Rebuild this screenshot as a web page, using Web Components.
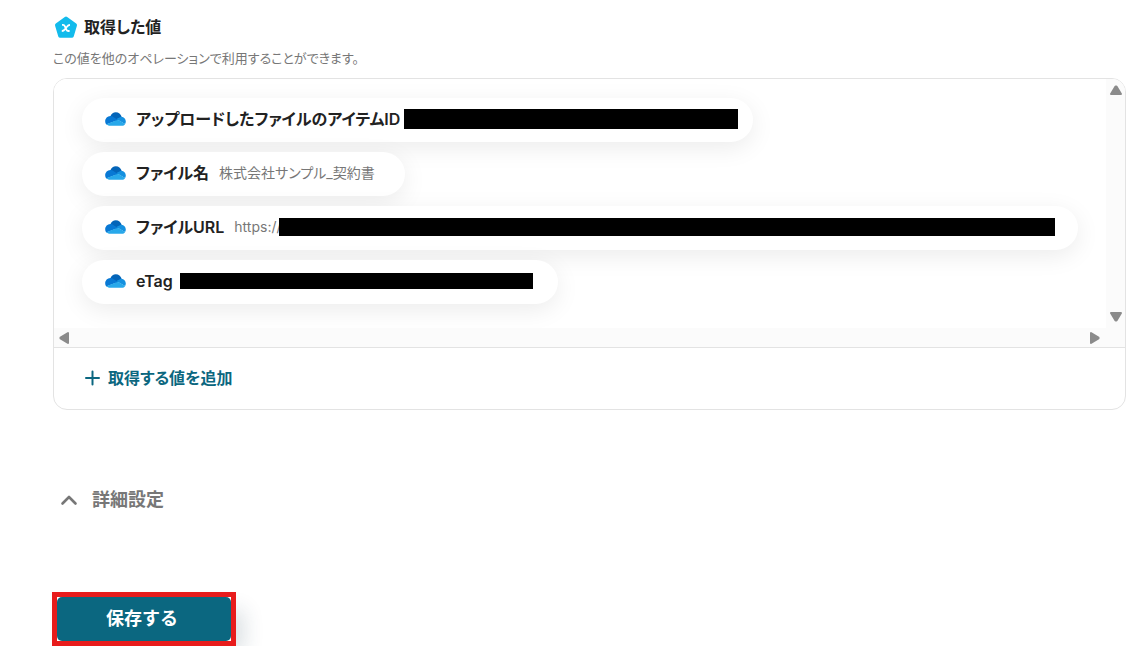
<!DOCTYPE html>
<html lang="ja">
<head>
<meta charset="utf-8">
<meta name="viewport" content="width=device-width, initial-scale=1">
<title>取得した値</title>
<style>
  body { margin: 0; background: #fff; color: #222; font-family: Inter, "Noto Sans CJK JP", sans-serif; font-feature-settings: "palt"; }
</style>
</head>
<body>
<operation-page></operation-page>
<script>
const define = (name, html) => {
  const template = document.createElement('template');
  template.innerHTML = html;
  customElements.define(name, class extends HTMLElement {
    constructor() {
      super();
      this.attachShadow({ mode: 'open' }).append(template.content.cloneNode(true));
    }
  });
};

define('variable-icon', `
<style>:host { display: block; width: 24px; height: 24px; } svg { display: block; }</style>
<svg width="24" height="24" viewBox="0 0 24 24" aria-hidden="true">
  <path d="M12 3.500 L21 10.200 L17.800 20.800 H6.200 L3 10.200Z" fill="#13bbec" stroke="#13bbec" stroke-width="4" stroke-linejoin="round"/>
  <path d="M8 9.900h1c1 0 1.500.5 1.900 1.400l1.500 3.300c.4.900.9 1.400 1.900 1.400h1.300M16 9.900c-1.500 0-2.300.8-3.100 1.900l-1.900 2.300c-.8 1.100-1.500 1.900-3.200 1.900" fill="none" stroke="#fff" stroke-width="1.800"/>
</svg>`);

define('cloud-icon', `
<style>:host { display: block; flex: none; width: 21px; height: 14px; } svg { display: block; }</style>
<svg width="21" height="14" viewBox="0 0 22 14" preserveAspectRatio="none" aria-hidden="true">
  <path d="M5.600 4.200C6.800 1.700 8.800.2 11.300.2c2.900 0 5.300 1.800 6.100 4.500L12 9.200 5.600 4.200Z" fill="#0364b8"/>
  <path d="M5.600 4.100c1.100-.1 2.200.2 3.100.8l5 3-12.400 4.500C.5 11.500.2 10.500.2 9.500c0-3 2.400-5.300 5.400-5.400Z" fill="#0878d4"/>
  <path d="M17.300 4.700c2.500.1 4.500 2.100 4.500 4.700 0 .9-.3 1.800-.7 2.500L13.500 8l-1.600-1 3.200-1.600c.7-.5 1.400-.7 2.200-.7Z" fill="#1490df"/>
  <path d="M1.300 12.300 13.500 7.700l7.700 4.200c-.8 1.200-2.100 1.900-3.700 1.900H5.400c-1.700 0-3.100-.6-4.100-1.500Z" fill="#28a8ea"/>
</svg>`);

define('section-heading', `
<style>
  :host { display: block; }
  .row { display: flex; align-items: center; gap: 6px; height: 24px; padding-left: 1px; }
  h2 { margin: 0; font-size: 16px; line-height: 24px; font-weight: 600; }
  p { margin: 9px 0 0; font-size: 13px; line-height: 20px; color: #777; }
</style>
<div class="row"><variable-icon></variable-icon><h2><slot name="title"></slot></h2></div>
<p><slot></slot></p>`);

define('value-pill', `
<style>
  :host { display: flex; align-items: center; box-sizing: border-box; height: 44px; padding: 0 16px 2px 23px; border-radius: 22px; background: #fff; box-shadow: 0 6px 24px rgba(0, 0, 0, .08); white-space: nowrap; }
  .label { margin-left: 10px; font-size: 16px; line-height: 24px; font-weight: 600; }
  .value { display: flex; align-items: center; margin-left: var(--value-gap, 10px); font-size: 14px; line-height: 24px; color: #777; }
</style>
<cloud-icon></cloud-icon>
<span class="label"><slot name="label"></slot></span>
<span class="value"><slot></slot></span>`);

define('redacted-bar', `
<style>:host { display: block; flex: none; background: #000; }</style>`);

define('scroll-rail', `
<style>
  :host { display: flex; justify-content: space-between; align-items: center; box-sizing: border-box; background: #fbfbfb; padding: 0 5px 0 4px; }
  :host([vertical]) { flex-direction: column; padding: 4px 0; }
  svg { display: block; flex: none; }
  :host([vertical]) svg { transform: rotate(90deg); }
</style>
<svg width="12" height="14" viewBox="0 0 12 14" aria-hidden="true"><path d="M10 2v10L2.500 7.500v-1Z" fill="#8b8b8b" stroke="#8b8b8b" stroke-width="2" stroke-linejoin="round"/></svg>
<svg width="12" height="14" viewBox="0 0 12 14" aria-hidden="true"><path d="M2 2v10l7.500-4.500v-1Z" fill="#8b8b8b" stroke="#8b8b8b" stroke-width="2" stroke-linejoin="round"/></svg>`);

define('value-panel', `
<style>
  :host { display: block; border: 1px solid #e3e3e3; border-radius: 14px; overflow: hidden; background: #fff; }
  .scroll { display: grid; grid-template-columns: minmax(0, 1fr) 19px; grid-template-rows: auto 19px; background: #fbfbfb; border-bottom: 1px solid #e3e3e3; }
  .list { display: flex; flex-direction: column; align-items: flex-start; gap: 10px; padding: 19px 28px 24px; overflow: hidden; background: #fff; }
  .footer { padding: 18px 30px 19px; }
</style>
<div class="scroll">
  <div class="list"><slot></slot></div>
  <scroll-rail vertical></scroll-rail>
  <scroll-rail></scroll-rail>
</div>
<div class="footer"><slot name="footer"></slot></div>`);

define('add-button', `
<style>
  :host { display: block; }
  button { display: flex; align-items: center; gap: 7px; padding: 0; border: 0; background: none; color: #0b6780; font: 600 16px/24px Inter, "Noto Sans CJK JP", sans-serif; font-feature-settings: "palt"; }
</style>
<button type="button">
  <svg width="17" height="16" viewBox="0 0 17 16" aria-hidden="true"><path d="M8.500 1.500v13M2 8h13" stroke="#0b6780" stroke-width="2" stroke-linecap="round"/></svg>
  <slot></slot>
</button>`);

define('detail-toggle', `
<style>
  :host { display: block; }
  button { display: flex; align-items: center; gap: 14px; padding: 0; border: 0; background: none; color: #777; font: 600 18px/28px Inter, "Noto Sans CJK JP", sans-serif; }
</style>
<button type="button">
  <svg width="18" height="12" viewBox="0 0 18 12" aria-hidden="true"><path d="M2.500 9.500 9 3l6.500 6.500" fill="none" stroke="#777" stroke-width="2.600" stroke-linecap="round" stroke-linejoin="round"/></svg>
  <slot></slot>
</button>`);

define('save-button', `
<style>
  :host { display: inline-block; border: 5px solid #e81c1c; background: #fff; box-shadow: 14px 12px 20px -6px rgba(30, 60, 80, .16); }
  button { display: block; width: 174px; height: 44px; padding: 0 4px 0 0; border: 0; border-radius: 5px; background: #0b6780; color: #fff; font: 600 18px/28px Inter, "Noto Sans CJK JP", sans-serif; }
</style>
<button type="button"><slot></slot></button>`);

define('operation-page', `
<style>
  :host { display: block; padding: 15px 5px 0 52px; }
  section-heading { margin-bottom: 10px; }
  section-heading, value-panel { margin-left: 1px; }
  detail-toggle { margin: 76px 0 78px 8px; }
  save-button { vertical-align: top; }
  .item-id { --value-gap: 4px; width: 671px; }
  .item-id redacted-bar { width: 334px; height: 20px; }
  .name { width: 323px; }
  .url { width: 996px; }
  .url redacted-bar { width: 776px; height: 18px; margin-left: -3px; }
  .etag { --value-gap: 7px; width: 476px; }
  .etag redacted-bar { width: 353px; height: 16px; }
</style>
<section-heading><span slot="title">取得した値</span>この値を他のオペレーションで利用することができます。</section-heading>
<value-panel>
  <value-pill class="item-id"><span slot="label">アップロードしたファイルのアイテムID</span><redacted-bar></redacted-bar></value-pill>
  <value-pill class="name"><span slot="label">ファイル名</span>株式会社サンプル_契約書</value-pill>
  <value-pill class="url"><span slot="label">ファイルURL</span>https://<redacted-bar></redacted-bar></value-pill>
  <value-pill class="etag"><span slot="label">eTag</span><redacted-bar></redacted-bar></value-pill>
  <add-button slot="footer">取得する値を追加</add-button>
</value-panel>
<detail-toggle>詳細設定</detail-toggle>
<save-button>保存する</save-button>`);
</script>
</body>
</html>
